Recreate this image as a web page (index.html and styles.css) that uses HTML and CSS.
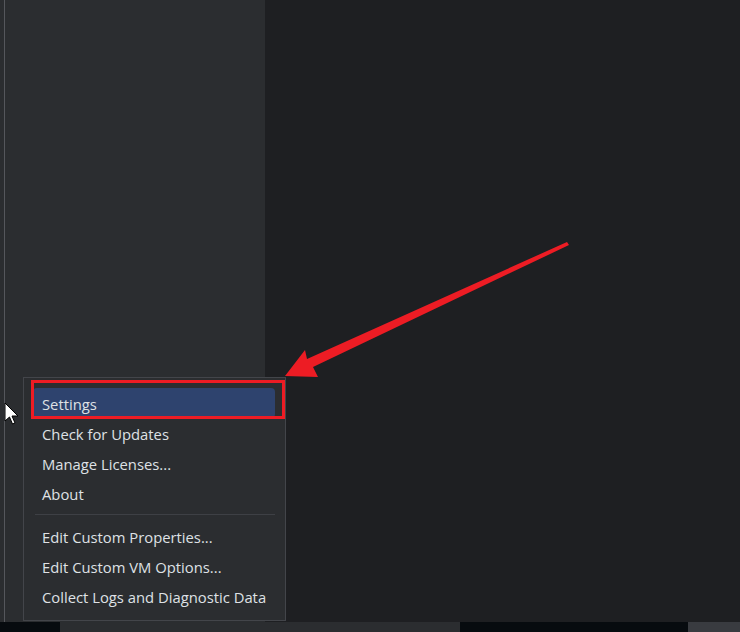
FILE: index.html
```html
<!DOCTYPE html>
<html lang="en">
<head>
  <meta charset="UTF-8">
  <title>Settings menu</title>
  <link rel="stylesheet" href="styles.css">
</head>
<body>
  <div class="ventana">
    <div class="principal">
      <div class="borde"></div>
      <div class="lateral"></div>
      <div class="editor"></div>
    </div>
    <div class="barra-inferior">
      <div class="seg seg-negro1"></div>
      <div class="seg seg-gris"></div>
      <div class="seg seg-negro2"></div>
      <div class="seg seg-claro"></div>
    </div>

    <div class="menu">
      <div class="item activo">Settings</div>
      <div class="item">Check for Updates</div>
      <div class="item">Manage Licenses...</div>
      <div class="item">About</div>
      <div class="separador"></div>
      <div class="item">Edit Custom Properties...</div>
      <div class="item">Edit Custom VM Options...</div>
      <div class="item">Collect Logs and Diagnostic Data</div>
    </div>

    <!-- anotaciones -->
    <div class="marco-rojo"></div>
    <svg class="flecha" width="740" height="632" viewBox="0 0 740 632">
      <polygon points="567,242 569,245 313,367 318,377 285,376 305,350 307,359" fill="#ed1c24"/>
    </svg>
    <svg class="cursor" width="16" height="24" viewBox="0 0 16 24">
      <path d="M1 1 L1 19 L5.5 15 L8.5 22 L11 21 L8 14 L14 14 Z" fill="#ffffff" stroke="#000000" stroke-width="1"/>
    </svg>
  </div>
</body>
</html>
```

FILE: styles.css
```css
html, body {
  margin: 0;
  padding: 0;
  width: 740px;
  height: 632px;
  overflow: hidden;
  background-color: #1e1f22;
  font-family: 'Open Sans', sans-serif;
}

.ventana {
  position: relative;
  width: 740px;
  height: 632px;
  display: flex;
  flex-direction: column;
}

.principal {
  flex: 1;
  display: flex;
}

.borde {
  width: 4px;
  background-color: #2b2d30;
}

.lateral {
  width: 260px;
  background-color: #2b2d30;
  border-left: 1px solid #55575c;
}

.editor {
  flex: 1;
  background-color: #1e1f22;
}

.barra-inferior {
  height: 10px;
  display: flex;
}

.seg-negro1 {
  width: 60px;
  background-color: #070b0f;
}

.seg-gris {
  width: 400px;
  background-color: #2b2d30;
}

.seg-negro2 {
  width: 228px;
  background-color: #070b0f;
}

.seg-claro {
  flex: 1;
  background-color: #393b40;
}

.menu {
  position: absolute;
  left: 23px;
  top: 377px;
  width: 242px;
  padding: 10px 10px 9px 9px;
  background-color: #2b2d30;
  border: 1px solid #43454a;
  display: flex;
  flex-direction: column;
}

.item {
  height: 30px;
  line-height: 32px;
  padding-left: 9px;
  font-size: 14.8px;
  color: #dfe1e5;
  border-radius: 4px;
  white-space: nowrap;
}

.item.activo {
  background-color: #2e436e;
}

.separador {
  height: 1px;
  margin: 6px 0 6px 2px;
  background-color: #3e4045;
}

.marco-rojo {
  position: absolute;
  left: 31px;
  top: 380px;
  width: 248px;
  height: 33px;
  border: 3px solid #ed1c24;
}

.flecha {
  position: absolute;
  left: 0;
  top: 0;
}

.cursor {
  position: absolute;
  left: 4px;
  top: 402px;
}
```
